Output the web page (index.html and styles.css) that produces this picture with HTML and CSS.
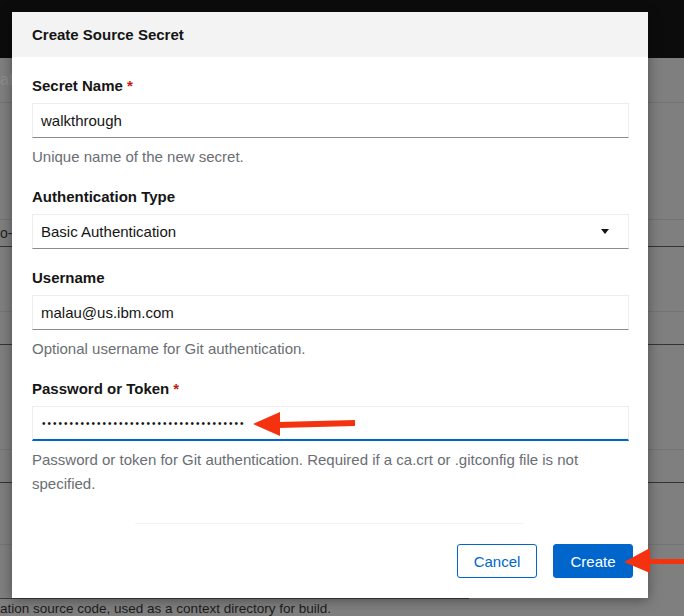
FILE: index.html
```html
<!DOCTYPE html>
<html lang="en">
<head>
<meta charset="utf-8">
<title>Create Source Secret</title>
<link rel="stylesheet" href="styles.css">
</head>
<body>
<div class="page">
  <div class="topbar"></div>
  <div class="page-body">
    <div class="bg-heading"><span class="bg-text-light">at</span></div>
    <div class="bg-field bg-field-1"><span class="bg-text-dark">o-</span></div>
    <div class="bg-field bg-field-2"></div>
    <div class="bg-field bg-field-3"></div>
    <div class="bg-line"></div>
    <div class="bg-rule"></div>
    <div class="bg-help">ation source code, used as a context directory for build.</div>
  </div>
</div>

<div class="modal" role="dialog" aria-label="Create Source Secret">
  <div class="modal-header">Create Source Secret</div>
  <div class="modal-body">
    <div class="field">
      <div class="label">Secret Name<span class="req">*</span></div>
      <div class="input">walkthrough</div>
      <div class="helper">Unique name of the new secret.</div>
    </div>
    <div class="field field-select">
      <div class="label">Authentication Type</div>
      <div class="input select"><span>Basic Authentication</span><span class="caret"></span></div>
    </div>
    <div class="field">
      <div class="label">Username</div>
      <div class="input">malau@us.ibm.com</div>
      <div class="helper">Optional username for Git authentication.</div>
    </div>
    <div class="field">
      <div class="label">Password or Token<span class="req">*</span></div>
      <div class="input input-focus"><span class="dots">•••••••••••••••••••••••••••••••••••••</span></div>
      <div class="helper">Password or token for Git authentication. Required if a ca.crt or .gitconfig file is not specified.</div>
    </div>
  </div>
  <div class="ghost-rule"></div>
  <div class="modal-footer">
    <button class="btn btn-secondary" type="button">Cancel</button>
    <button class="btn btn-primary" type="button">Create</button>
  </div>
</div>

<svg class="arrow arrow-pw" width="110" height="40" viewBox="0 0 110 40" aria-hidden="true">
  <polygon points="3,20 30,8 30,32" fill="#f4320f"/>
  <polygon points="28,18 105,16 105,22 28,24" fill="#f4320f"/>
</svg>
<svg class="arrow arrow-create" width="64" height="40" viewBox="0 0 64 40" aria-hidden="true">
  <polygon points="4,22 30,8 30,33" fill="#f4320f"/>
  <polygon points="28,19 64,19 64,24 28,24" fill="#f4320f"/>
</svg>
</body>
</html>
```
FILE: styles.css
```css
* { box-sizing: border-box; }
html, body { margin: 0; padding: 0; }
body {
  width: 684px;
  height: 616px;
  overflow: hidden;
  position: relative;
  font-family: "Liberation Sans", Arial, sans-serif;
  font-size: 15px;
  color: #151515;
  background: #7f7f7f;
}

/* background page (under the backdrop) */
.page { display: flex; flex-direction: column; height: 616px; }
.topbar { height: 58px; background: #0c0c0c; flex: none; }
.page-body { flex: 1; background: #7f7f7f; display: flex; flex-direction: column; }
.bg-heading {
  height: 45px;
  border-bottom: 1px solid #727272;
  display: flex;
  align-items: center;
}
.bg-text-light { color: #8e8e8e; font-size: 16px; white-space: nowrap; }
.bg-text-dark { color: #222; font-size: 14px; white-space: nowrap; }
.bg-field {
  height: 28px;
  border-top: 1px solid #747474;
  border-bottom: 1px solid #343434;
  display: flex;
  align-items: center;
}
.bg-field-1 { margin-top: 116px; }
.bg-field-2 { margin-top: 64px; height: 34px; }
.bg-field-3 { margin-top: 104px; height: 34px; }
.bg-line { margin-top: 61px; border-top: 1px solid #747474; }
.bg-rule { margin-top: 53px; width: 469px; border-top: 1px solid #3a3a3a; }
.bg-help {
  white-space: nowrap;
  line-height: 16px;
  color: #1c1c1c;
  font-size: 13.5px;
  margin-top: 2px;
}

/* modal */
.modal {
  position: absolute;
  left: 12px;
  top: 12px;
  width: 636px;
  height: 586px;
  background: #fff;
  box-shadow: 0 2px 12px rgba(0, 0, 0, 0.4);
  display: flex;
  flex-direction: column;
}
.modal-header {
  height: 45px;
  flex: none;
  background: #f3f3f3;
  padding: 0 20px;
  display: flex;
  align-items: center;
  font-weight: 700;
  font-size: 15px;
}
.modal-body {
  padding: 19px 19px 0 20px;
  display: flex;
  flex-direction: column;
}
.field { display: flex; flex-direction: column; }
.field + .field { margin-top: 18px; }
.field-select + .field { margin-top: 19px; }
.label {
  line-height: 20px;
  font-weight: 700;
  margin-bottom: 7px;
}
.req { color: #c9190b; margin-left: 4px; }
.input {
  height: 35px;
  border: 1px solid #ededed;
  border-bottom-color: #8a8d90;
  padding: 0 8px;
  display: flex;
  align-items: center;
}
.input-focus { border-bottom: 2px solid #0066cc; padding-top: 1px; }
.select { justify-content: space-between; padding-right: 19px; }
.caret {
  width: 0;
  height: 0;
  border-left: 4px solid transparent;
  border-right: 4px solid transparent;
  border-top: 5px solid #151515;
}
.dots {
  font-size: 10px;
  letter-spacing: 2px;
  color: #151515;
  padding-left: 1px;
}
.helper {
  margin-top: 7px;
  line-height: 24px;
  color: #6a6e73;
}
.ghost-rule {
  margin-top: auto;
  margin-left: 123px;
  width: 389px;
  height: 1px;
  background: #f4f4f4;
  flex: none;
}
.modal-footer {
  margin-top: 20px;
  padding: 0 15px 20px;
  display: flex;
  justify-content: flex-end;
  gap: 16px;
}
.btn {
  height: 34px;
  min-width: 80px;
  padding: 0 14px;
  border-radius: 3px;
  font-family: inherit;
  font-size: 15px;
  border: 1px solid #0066cc;
}
.btn-secondary { background: #fff; color: #0066cc; }
.btn-primary { background: #0066cc; color: #fff; }

/* annotation arrows drawn over the screenshot */
.arrow { position: absolute; }
.arrow-pw { left: 250px; top: 404px; }
.arrow-create { left: 620px; top: 540px; }
```
